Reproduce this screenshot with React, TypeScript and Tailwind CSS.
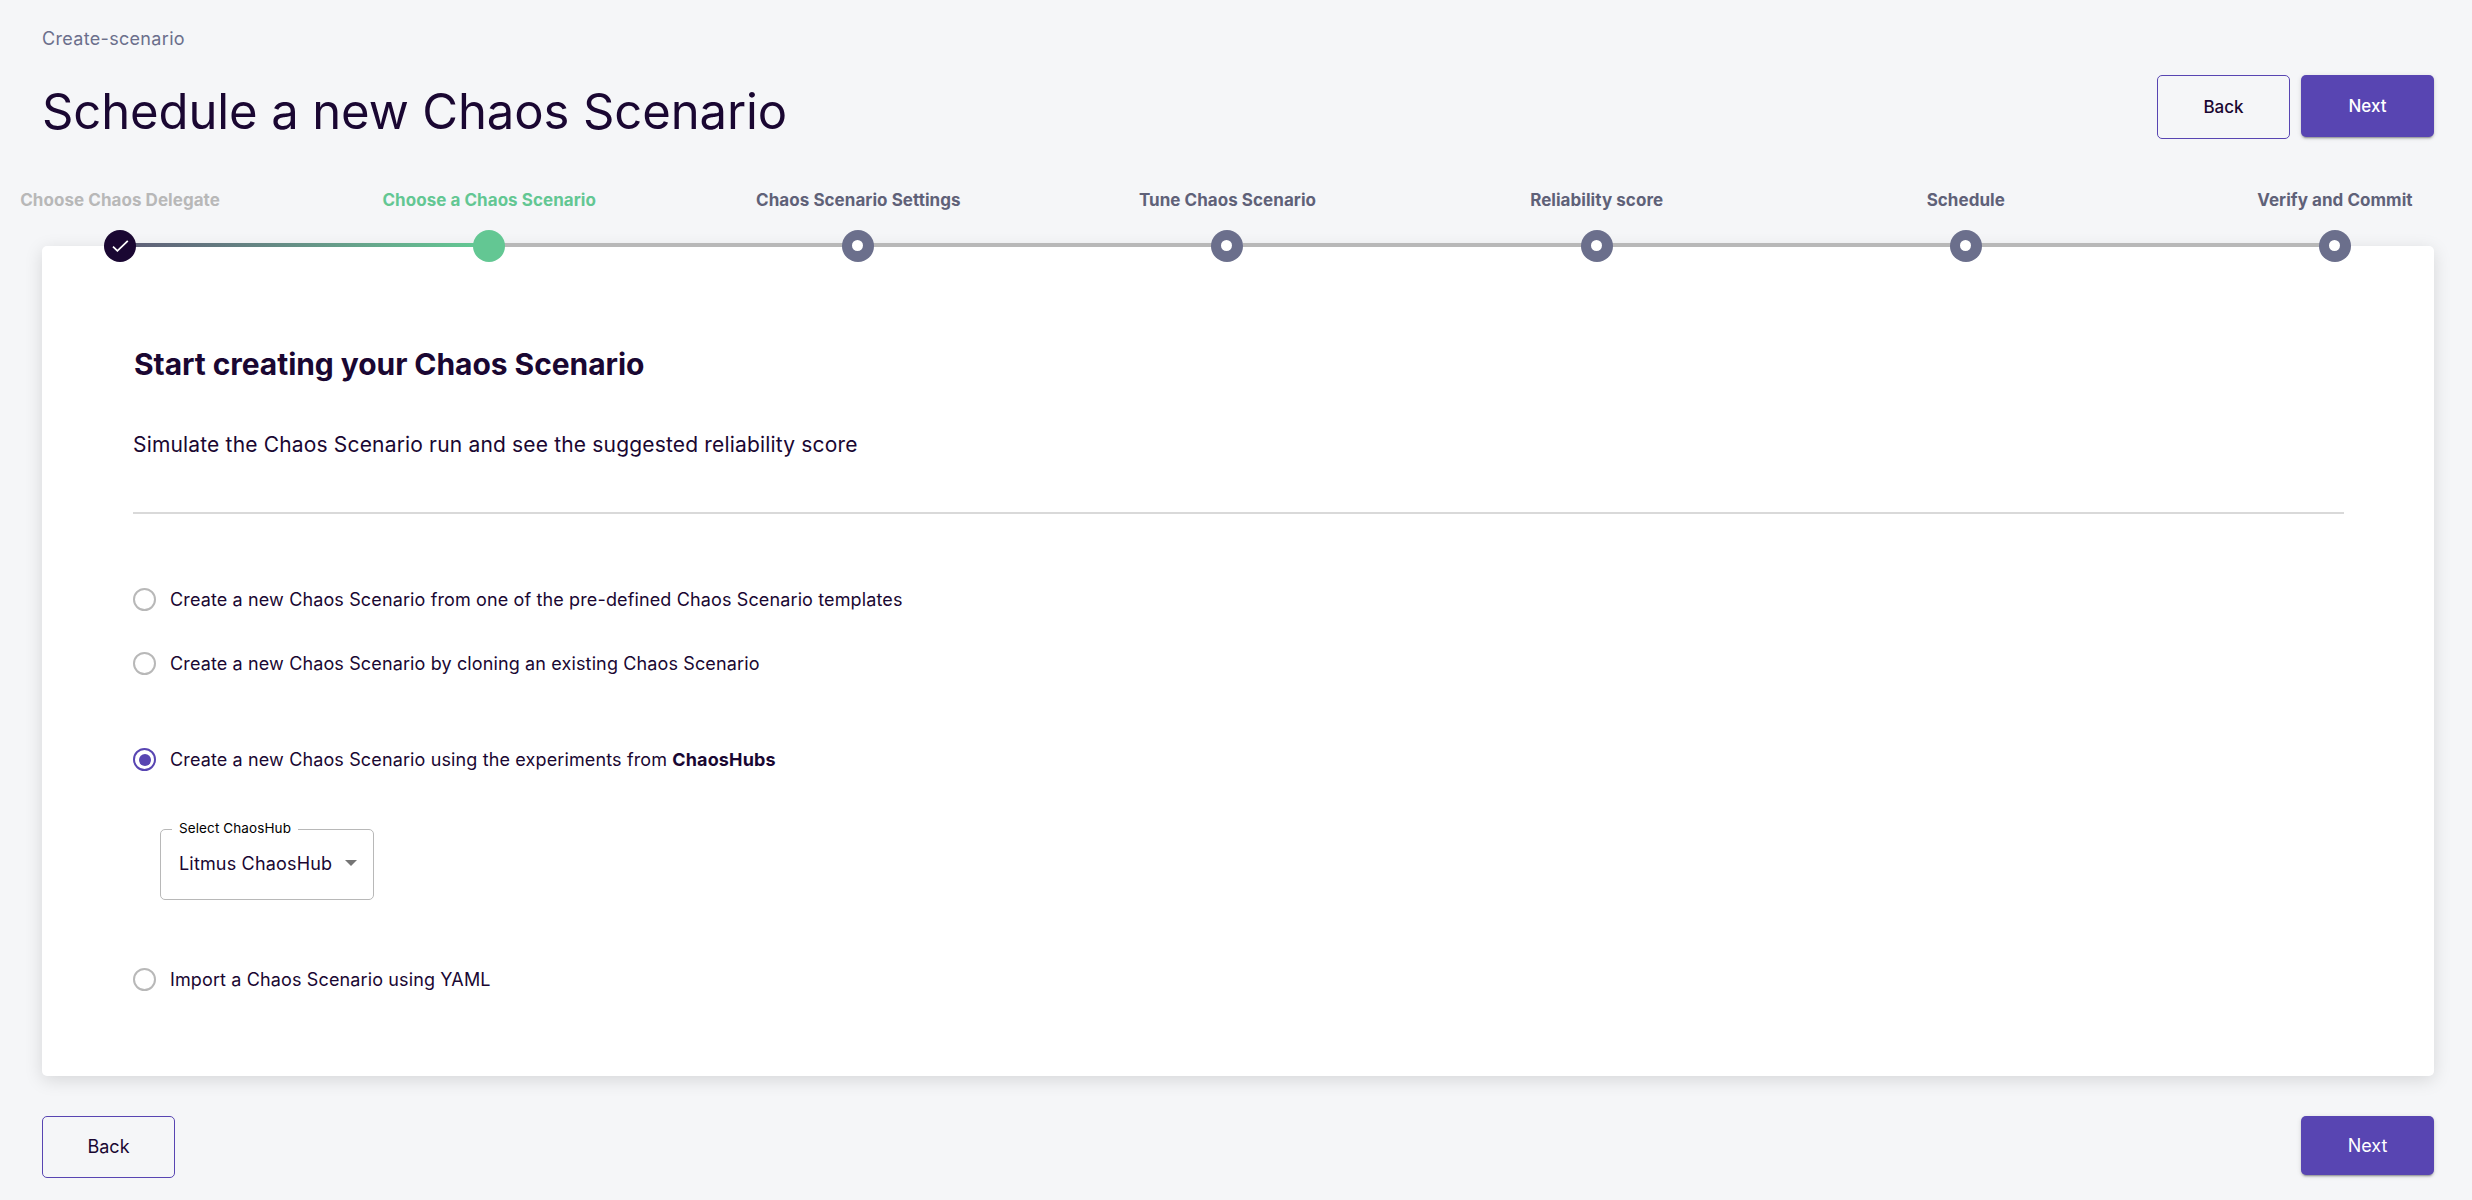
import React from "react";

type StepState = "done" | "active" | "todo";

const steps: { label: string; state: StepState }[] = [
  { label: "Choose Chaos Delegate", state: "done" },
  { label: "Choose a Chaos Scenario", state: "active" },
  { label: "Chaos Scenario Settings", state: "todo" },
  { label: "Tune Chaos Scenario", state: "todo" },
  { label: "Reliability score", state: "todo" },
  { label: "Schedule", state: "todo" },
  { label: "Verify and Commit", state: "todo" },
];

const labelColor: Record<StepState, string> = {
  done: "text-[#b8b8b8]",
  active: "text-[#63c793]",
  todo: "text-[#5f6178]",
};

function StepDot({ state }: { state: StepState }) {
  if (state === "done") {
    return (
      <span className="flex size-8 items-center justify-center rounded-full bg-[#1a0732]">
        <svg width="17" height="12" viewBox="0 0 17 12" fill="none">
          <path d="M1 6.6 L5.4 10.8 L15.8 0.8" stroke="#fff" strokeWidth="1.8" />
        </svg>
      </span>
    );
  }
  if (state === "active") return <span className="block size-8 rounded-full bg-[#63c793]" />;
  return (
    <span className="flex size-8 items-center justify-center rounded-full bg-[#6b6f8c]">
      <span className="mr-px mb-px size-[11px] rounded-full bg-white" />
    </span>
  );
}

function Stepper() {
  return (
    <div className="relative z-10 mt-[41px] -ml-[106.5px] grid w-[2584px] grid-cols-7">
      {steps.map((s, i) => (
        <div key={s.label} className="relative flex flex-col items-center">
          {i > 0 && (
            <span
              className={
                "absolute top-[55px] right-[calc(50%+15px)] left-[calc(-50%+15px)] h-1 " +
                (i === 1 ? "bg-linear-to-r from-[#5f6178] to-[#63c793]" : "bg-[#b8b8b8]")
              }
            />
          )}
          <span className={"text-[17px] leading-6 font-bold tracking-[0.05px] " + labelColor[s.state]}>
            {s.label}
          </span>
          <div className="relative z-10 mt-[18px]">
            <StepDot state={s.state} />
          </div>
        </div>
      ))}
    </div>
  );
}

function Radio({ checked, className, children }: { checked?: boolean; className: string; children: React.ReactNode }) {
  return (
    <label className={"flex h-[23px] items-center " + className}>
      <span
        className={
          "flex size-[23px] items-center justify-center rounded-full border-2 " +
          (checked ? "border-[#5845b2]" : "border-[#b8b8b8]")
        }
      >
        {checked && <span className="size-[12px] rounded-full bg-[#5845b2]" />}
      </span>
      <span className="ml-[14px] text-[18px] leading-[23px] tracking-[0.13px]">{children}</span>
    </label>
  );
}

const buttonBase = "flex w-[133px] items-center justify-center rounded-[5px] ";
const outlined = buttonBase + "border border-[#5845b2] ";
const filled =
  buttonBase +
  "bg-[#5845b2] text-white shadow-[0_3px_1px_-2px_rgba(0,0,0,0.2),0_2px_2px_0_rgba(0,0,0,0.14),0_1px_5px_0_rgba(0,0,0,0.12)] ";

export default function App() {
  return (
    <div className="h-[1200px] w-[2472px] overflow-hidden bg-[#f5f6f8] pt-[25px] pr-[38px] pl-[42px] font-['Inter',sans-serif] text-[#1a0732]">
      <div className="text-[18px] leading-7 tracking-[0.32px] text-[#6b6f8c]">Create-scenario</div>

      <header className="mt-[22px] flex h-[72px] items-start justify-between">
        <h1 className="text-[49px] leading-[74px] font-normal tracking-[-0.11px]">Schedule a new Chaos Scenario</h1>
        <div className="flex items-start gap-[11px]">
          <button className={outlined + "h-16 pt-px text-[17px] font-medium"}>Back</button>
          <button className={filled + "h-[62px] pt-0.5 text-[17px] font-medium"}>Next</button>
        </div>
      </header>

      <Stepper />

      <main className="-mt-4 h-[830px] rounded-[5px] bg-white pt-[98px] pr-[90px] pl-[91px] shadow-[0_4px_18px_rgba(0,0,0,0.13)]">
        <h2 className="ml-px text-[30px] leading-10 font-bold tracking-[-0.06px]">
          Start creating your Chaos Scenario
        </h2>
        <p className="mt-[46px] text-[21px] leading-[30px] tracking-[0.17px]">
          Simulate the Chaos Scenario run and see the suggested reliability score
        </p>
        <div className="mt-[52px] h-0.5 bg-[#d9d9d9]" />

        <Radio className="mt-[74px]">
          Create a new Chaos Scenario from one of the pre-defined Chaos Scenario templates
        </Radio>
        <Radio className="mt-[41px]">Create a new Chaos Scenario by cloning an existing Chaos Scenario</Radio>
        <Radio className="mt-[73px]" checked>
          Create a new Chaos Scenario using the experiments from <b>ChaosHubs</b>
        </Radio>

        <div className="relative mt-[58px] ml-[27px] flex h-[71px] w-[214px] items-center rounded-[5px] border border-[#b8b8b8] pl-[18px]">
          <span className="absolute -top-[11px] left-[11px] bg-white px-[7px] text-[13.5px] leading-[18px] tracking-[0.1px] text-black">
            Select ChaosHub
          </span>
          <span className="mb-0.5 text-[18px] tracking-[0.17px]">Litmus ChaosHub</span>
          <svg className="mb-1 ml-[13px]" width="12" height="6" viewBox="0 0 12 6">
            <path d="M0 0H12L6 6Z" fill="#757575" />
          </svg>
        </div>

        <Radio className="mt-[68px]">Import a Chaos Scenario using YAML</Radio>
      </main>

      <footer className="mt-10 flex items-start justify-between">
        <button className={outlined + "h-[62px] pb-0.5 text-[18px]"}>Back</button>
        <button className={filled + "h-[59px] text-[18px]"}>Next</button>
      </footer>
    </div>
  );
}
